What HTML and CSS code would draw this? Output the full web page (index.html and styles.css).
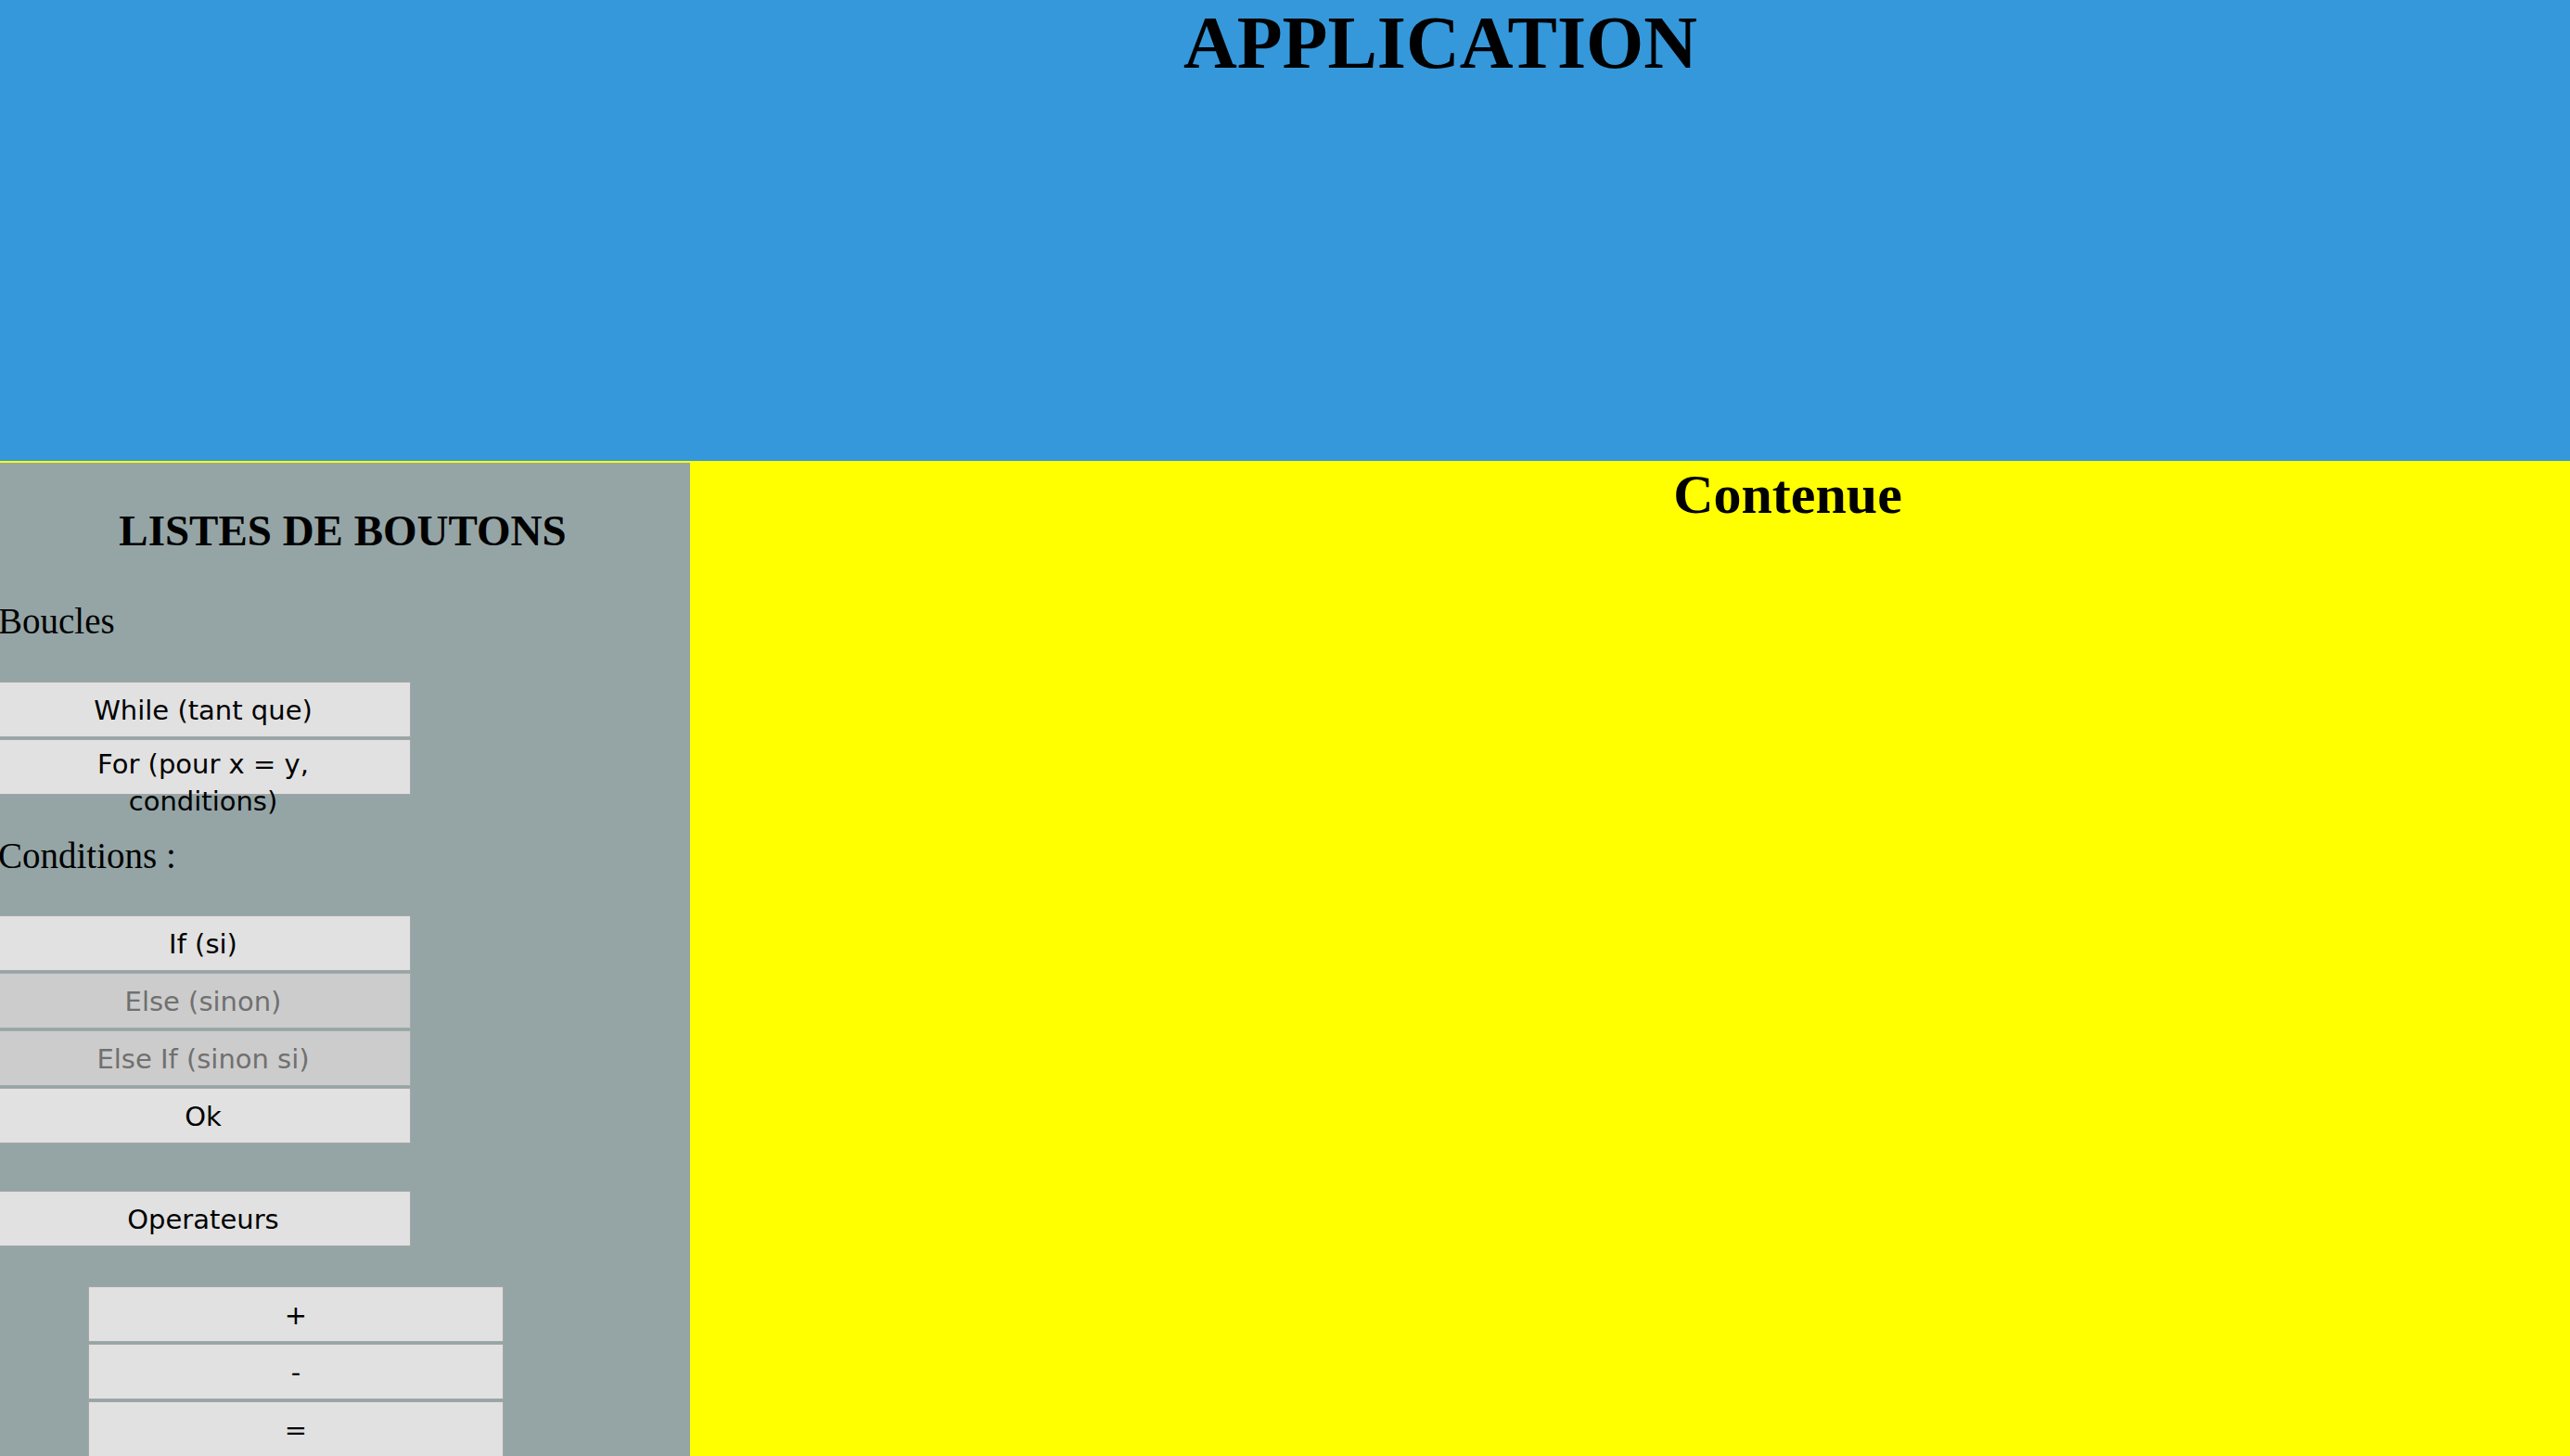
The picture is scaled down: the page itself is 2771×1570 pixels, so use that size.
FILE: index.html
```html
<!DOCTYPE html>
<html lang="fr">
<head>
<meta charset="utf-8">
<title>Application</title>
<link rel="stylesheet" href="styles.css">
</head>
<body>
<header class="app-header">
  <h1 class="app-title">APPLICATION</h1>
</header>
<main class="layout">
  <aside class="sidebar">
    <div class="sidebar-inner">
      <h2 class="sidebar-title">LISTES DE BOUTONS</h2>
      <p class="group-label label-loops">Boucles</p>
      <div class="btn-stack">
        <button class="btn" type="button">While (tant que)</button>
        <button class="btn" type="button">For (pour x = y, conditions)</button>
      </div>
      <p class="group-label label-conditions">Conditions :</p>
      <div class="btn-stack">
        <button class="btn" type="button">If (si)</button>
        <button class="btn" type="button" disabled>Else (sinon)</button>
        <button class="btn" type="button" disabled>Else If (sinon si)</button>
        <button class="btn" type="button">Ok</button>
      </div>
      <div class="btn-stack stack-operators">
        <button class="btn" type="button">Operateurs</button>
      </div>
      <div class="btn-stack stack-sub">
        <button class="btn" type="button">+</button>
        <button class="btn" type="button">-</button>
        <button class="btn" type="button">=</button>
      </div>
    </div>
  </aside>
  <section class="content">
    <h2 class="content-title">Contenue</h2>
  </section>
</main>
</body>
</html>
```

FILE: styles.css
```css
html, body {
  margin: 0;
  padding: 0;
  overflow: hidden;
}

body {
  font-family: "Liberation Serif", "Times New Roman", serif;
  color: #000;
  background: #ffff00;
}

.app-header {
  height: 497px;
  background: #3598db;
  overflow: hidden;
}

.app-title {
  margin: 1px 0 0 0;
  padding-left: 335px;
  font-size: 80px;
  line-height: 90px;
  font-weight: bold;
  text-align: center;
}

.layout {
  display: flex;
  min-height: calc(100vh - 497px);
  background: #ffff00;
}

.sidebar {
  width: 744px;
  flex: 0 0 744px;
  margin-top: 2px;
  background: #95a5a6;
}

.sidebar-inner {
  width: 744px;
  margin-left: -5px;
}

.sidebar-title {
  margin: 47px 0 50px 0;
  padding-left: 5px;
  font-size: 47px;
  line-height: 52px;
  font-weight: bold;
  text-align: center;
}

.group-label {
  margin: 0;
  padding-left: 3px;
  font-size: 39px;
  line-height: 43px;
}

.label-loops {
  margin-bottom: 44px;
}

.label-conditions {
  margin-top: 44px;
  margin-bottom: 43px;
}

.btn-stack {
  display: flex;
  flex-direction: column;
  align-items: flex-start;
  gap: 2px;
}

.stack-operators {
  margin-top: 51px;
}

.stack-sub {
  margin-top: 43px;
  margin-left: 100px;
}

.btn {
  display: flex;
  flex-direction: column;
  justify-content: safe center;
  box-sizing: border-box;
  width: 448px;
  height: 60px;
  margin: 0;
  padding: 6px 40px 4px 40px;
  border: 1px solid #a6a6a6;
  border-radius: 0;
  background: #e1e1e1;
  color: #000;
  font-family: "DejaVu Sans", Verdana, sans-serif;
  font-size: 29px;
  line-height: 40px;
  text-align: center;
  overflow: visible;
}

.btn:disabled {
  background: #cccccc;
  color: #707070;
  border-color: #a3abab;
}

.content {
  flex: 1 1 auto;
  background: #ffff00;
}

.content-title {
  margin: 3px 0 0 0;
  padding-left: 340px;
  font-size: 60px;
  line-height: 66px;
  font-weight: bold;
  text-align: center;
}
```
